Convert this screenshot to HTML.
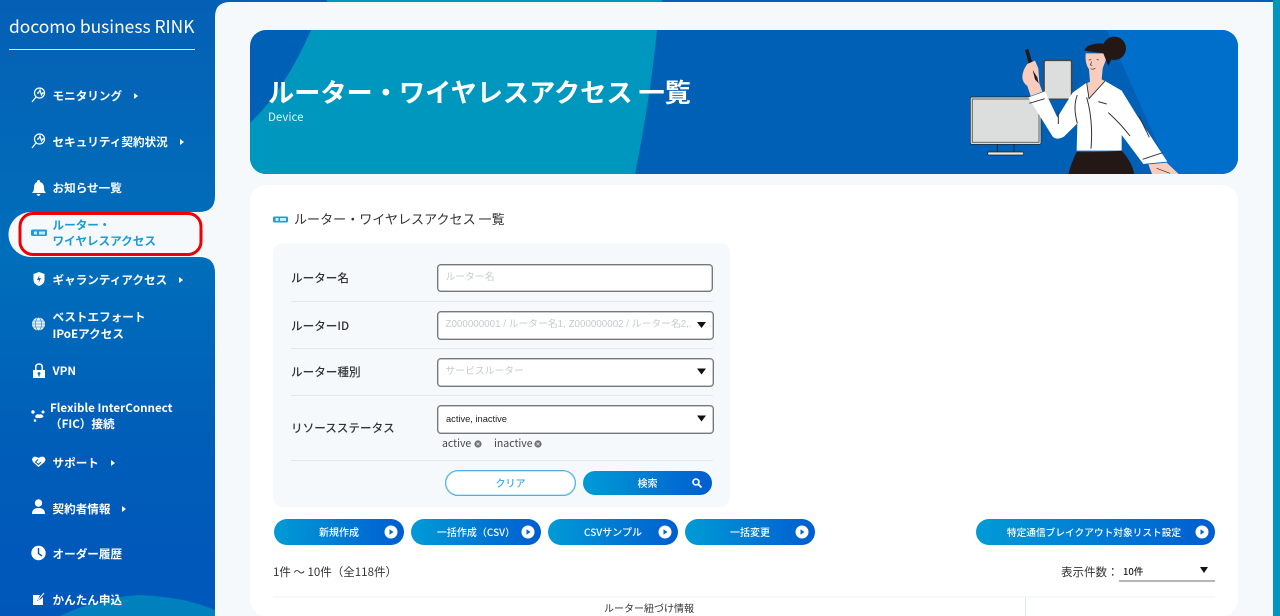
<!DOCTYPE html>
<html lang="ja"><head><meta charset="utf-8"><title>docomo business RINK</title>
<style>
html,body{margin:0;padding:0}
body{width:1280px;height:616px;overflow:hidden;position:relative;background:#fff;font-family:"Liberation Sans","Noto Sans CJK JP",sans-serif;color:#333}
#w{position:absolute;left:0;top:0;width:1280px;height:616px;overflow:hidden;filter:blur(.3px)}
.a{position:absolute;white-space:nowrap}
.j{font-family:"Noto Sans CJK JP","Liberation Sans",sans-serif}
.n{color:#fff;font-weight:700;font-size:11.6px;line-height:17px;left:52.5px;font-family:"Noto Sans CJK JP",sans-serif}
.l{left:291px;font-size:11.6px;font-weight:500;line-height:16px;font-family:"Noto Sans CJK JP",sans-serif;color:#333}
.i{position:absolute;box-sizing:border-box;background:#fff;border:1px solid #777;box-shadow:inset 0 0 0 .6px #aaa;border-radius:4px;left:437px;width:277px;height:29px;font-size:9.8px;color:#c6cacd;line-height:26px;padding-left:7.5px;white-space:nowrap;font-family:"Liberation Sans","Noto Sans CJK JP",sans-serif}
.h{position:absolute;height:1px;left:291px;width:422px;background:#e4e8ec}
.b{position:absolute;height:26px;top:519px;border-radius:13px;background:linear-gradient(90deg,#009bd6,#005dd0);color:#fff;font:500 10px/26px "Noto Sans CJK JP",sans-serif;text-align:center;white-space:nowrap}
.b svg{position:absolute;right:6px;top:6px}
</style></head><body><div id="w">
<svg class="a" style="left:0;top:0" width="1280" height="616" viewBox="0 0 1280 616">
<defs>
<linearGradient id="s" x1="0" y1="0" x2="0" y2="1"><stop offset="0" stop-color="#0560b5"/><stop offset=".42" stop-color="#006eba"/><stop offset=".75" stop-color="#005cb9"/><stop offset="1" stop-color="#0057ba"/></linearGradient>
<clipPath id="c"><rect x="250" y="30" width="988" height="144" rx="16"/></clipPath>
</defs>
<rect width="1280" height="616" fill="url(#s)"/>
<rect x="327" y="0" width="335" height="3" fill="#0097bf"/>
<rect x="1273" y="0" width="7" height="616" fill="#0097bf"/>
<path d="M60 616Q100 597 140 595Q185 597 215 610V616Z" fill="#0080bc"/>
<path d="M230 2H1273V616H215V273Q215 257 199 257H31A22.5 22.5 0 0 1 31 212H199Q215 212 215 196V17Q215 2 230 2Z" fill="#f5f9fc"/>
<g clip-path="url(#c)">
<path d="M250 30H1238V174H250Z" fill="#0060b6"/>
<path d="M1107 30H1238V174H1170L1153 133Z" fill="#006fcb"/>
<path d="M311 30H657Q650 100 635 174H250V123Q285 90 311 30Z" fill="#0097bf"/>
<g transform="translate(940 20) scale(.33333)">
<rect x="91" y="231" width="212" height="142" rx="5" fill="#dcdedd" stroke="#222" stroke-width="2"/>
<rect x="97" y="237" width="200" height="130" fill="#dcdedd" stroke="#666" stroke-width="3"/>
<path d="M172 373V396M222 373V396" stroke="#222" stroke-width="3"/>
<rect x="143" y="396" width="108" height="9" rx="4" fill="#e8e8e8" stroke="#222" stroke-width="2"/>
<rect x="312" y="121" width="83" height="117" rx="5" fill="#dcdedd" stroke="#444" stroke-width="5"/>
<path d="M255 90L265 87L276 125L266 130Z" fill="#231815"/>
<path d="M247 170Q248 150 262 132L285 122L295 145L298 190L307 215L272 228L262 198Q247 188 247 170Z" fill="#f8cdbd"/>
<path d="M278 150L292 172L296 190L285 178Z" fill="#231815"/>
<path d="M437 100Q434 130 447 148L450 185L440 190L447 236L495 183L485 178L488 145L505 100Z" fill="#f8cdbd"/>
<circle cx="523" cy="85" r="35" fill="#231815"/>
<path d="M433 92Q438 72 480 70Q515 72 522 100L505 138L490 100Z" fill="#231815"/>
<path d="M446 120L454 119M470 118L476 120M455 125L451 135L457 136M452 146Q460 150 466 144" stroke="#333" stroke-width="2" fill="none"/>
<path d="M265 232L315 214L352 292L398 218L440 188L447 236L495 183L545 212L590 285L682 425L610 432L545 345L545 392L410 392L412 310L372 350Q350 362 338 350Z" fill="#fff"/>
<path d="M440 188L447 236L495 183" stroke="#222" stroke-width="2.500" fill="none"/>
<path d="M268 250L314 236M608 418L668 398M475 245L500 252M355 275V312M412 225Q398 260 412 310M440 232Q460 300 453 386M505 278Q545 315 570 348M597 288L628 352" stroke="#333" stroke-width="3" fill="none"/>
<path d="M410 396Q480 398 545 392Q575 425 583 462H385Q395 425 410 396Z" fill="#231815"/>
<path d="M625 433L680 428L716 462H636Z" fill="#f8cdbd"/>
<path d="M650 445L690 460" stroke="#333" stroke-width="2"/>
</g>
</g>
<rect x="250" y="185" width="988" height="431" rx="16" fill="#fff"/>
<rect x="273" y="243" width="457" height="264" rx="10" fill="#f5f9fc"/>
<rect x="20" y="213.500" width="181" height="41" rx="13" fill="#f5f9fc" stroke="#ee0000" stroke-width="3"/>
<path d="M273 597H1215" stroke="#eef1f4"/><path d="M1025.500 597V616" stroke="#dfeaf6"/>
<path d="M1119 581H1215" stroke="#8a8a8a" stroke-width="1.200"/>
<!-- sidebar icons -->
<g fill="none" stroke="#fff" stroke-width="1.200"><circle cx="39.500" cy="93" r="5"/><path d="M36 97L32 102M37 93H38.500L40 90L41.500 95L42.500 93H44"/><circle cx="39.500" cy="139" r="5"/><path d="M36 143L32 148M37 139H38.500L40 136L41.500 141L42.500 139H44"/></g>
<path d="M38.500 180Q40 180 40 182Q44 183 44 188Q44 191 46 193H32Q34 191 34 188Q34 183 37 182Q37 180 38.500 180ZM36.500 194H40.500Q39.500 196 38.500 196Q37.500 196 36.500 194Z" fill="#fff"/>
<rect x="31" y="229.500" width="16" height="6.500" rx="1.500" fill="#1a9fdc"/><path d="M34 231.500H37V234.500H34ZM39 231.500H45V234.500H39Z" fill="#cfeaf7"/>
<path d="M39 272L44.500 274V280Q44.500 284 39 286Q33.500 284 33.500 280V274Z" fill="#fff"/><path d="M39.500 275L37 280H39L38.500 283L41 278H39Z" fill="#0a67b8"/>
<circle cx="38.500" cy="324" r="6.500" fill="#e6f0f8"/><g stroke="#2b7cc2" stroke-width=".6" fill="none"><path d="M32 324H45M33 321H44M33 327H44"/><ellipse cx="38.500" cy="324" rx="3" ry="6.500"/></g>
<path d="M33 370H45V378H33Z" fill="#fff"/><path d="M35.800 371V367Q35.800 364 39 364Q42.200 364 42.200 367V371" fill="none" stroke="#fff" stroke-width="1.500"/><circle cx="39" cy="373.500" r="1.400" fill="#0a67b8"/><rect x="38.400" y="374" width="1.200" height="2.500" fill="#0a67b8"/>
<g fill="#fff"><circle cx="33" cy="412" r="1.700"/><circle cx="35" cy="420.500" r="1.300"/><circle cx="43" cy="412" r="1.500"/><path d="M35 417Q36 413.500 39 414.500Q42 413.500 43.500 416.500Q42 418.500 39 418Q36 418.500 35 417Z"/></g>
<path d="M38.500 467L33 462Q31 459 33.500 457Q36 456 38.500 458Q41 456 44 457Q46.500 459 44.500 462Z" fill="#fff"/><path d="M38 459.500L35.500 462L38.500 464.500L41 462" stroke="#0a5fb8" stroke-width="1.100" fill="none"/>
<circle cx="38.500" cy="503" r="3.700" fill="#fff"/><path d="M32 514Q32 508 38.500 508Q45 508 45 514Z" fill="#fff"/>
<circle cx="38.500" cy="553" r="7.200" fill="#fff"/><path d="M38.500 548V553.500L42 556" stroke="#0a5cb8" stroke-width="1.500" fill="none"/>
<path d="M33 595H40L37 601L41 599L43 597V605H33Z" fill="#fff"/><path d="M38 600L44 593" stroke="#fff" stroke-width="1"/>
<path d="M134 93L138 96L134 99ZM180 139L184 142L180 145ZM179 277L183 280L179 283ZM111 460L115 463L111 466ZM122 506L126 509L122 512Z" fill="#fff"/>
<!-- heading icon -->
<rect x="273" y="216.500" width="15" height="6" rx="1.500" fill="#1a9fdc"/><path d="M275.500 218H278.500V221H275.500ZM280 218H286V221H280Z" fill="#cfeaf7"/>
<circle cx="478" cy="444" r="3.600" fill="#6f6f6f"/><circle cx="538" cy="444" r="3.600" fill="#6f6f6f"/>
<path d="M476.500 442.500L479.500 445.500M479.500 442.500L476.500 445.500M536.500 442.500L539.500 445.500M539.500 442.500L536.500 445.500" stroke="#ddd" stroke-width=".9"/>
</svg>

<div class="a" style="left:9px;top:13px;font:400 17.400px/28px 'Noto Sans CJK JP',sans-serif;color:#fff">docomo business RINK</div>
<div class="a" style="left:9px;top:49px;width:186px;height:1px;background:#d5e6f3"></div>
<div class="a n" style="top:88px">モニタリング</div>
<div class="a n" style="top:134px">セキュリティ契約状況</div>
<div class="a n" style="top:180px">お知らせ一覧</div>
<div class="a n" style="top:217px;line-height:16px;color:#1a9bd6">ルーター・<br>ワイヤレスアクセス</div>
<div class="a n" style="top:272px">ギャランティアクセス</div>
<div class="a n" style="top:309px">ベストエフォート<br>IPoEアクセス</div>
<div class="a n" style="top:363px">VPN</div>
<div class="a n" style="top:400px;left:50px;line-height:16px">Flexible InterConnect<br>（FIC）接続</div>
<div class="a n" style="top:455px">サポート</div>
<div class="a n" style="top:501px">契約者情報</div>
<div class="a n" style="top:546px">オーダー履歴</div>
<div class="a n" style="top:592px">かんたん申込</div>

<div class="a j" style="left:268px;top:72px;font-size:26.200px;line-height:38px;font-weight:700;color:#fff">ルーター・ワイヤレスアクセス 一覧</div>
<div class="a j" style="left:268px;top:109px;font-size:11.500px;line-height:16px;color:#e4f2f8">Device</div>
<div class="a j" style="left:294px;top:209px;font-size:13.050px;line-height:20px;font-weight:400;color:#333">ルーター・ワイヤレスアクセス 一覧</div>

<div class="a l" style="top:270px">ルーター名</div>
<div class="a l" style="top:318px">ルーターID</div>
<div class="a l" style="top:364px">ルーター種別</div>
<div class="a l" style="top:420px">リソースステータス</div>
<div class="i" style="top:264px;width:276px;height:28px">ルーター名</div>
<div class="i" style="top:311px">Z000000001 / ルーター名1, Z000000002 / ルーター名2,.</div>
<div class="i" style="top:358px">サービスルーター</div>
<div class="i" style="top:405px;color:#222;font-weight:500;font-size:9.300px;padding-left:8px">active, inactive</div>
<div class="h" style="top:301px"></div><div class="h" style="top:348px"></div><div class="h" style="top:395px"></div><div class="h" style="top:460px"></div>
<div class="a j" style="left:442px;top:436px;font-size:10.500px;line-height:16px;color:#444">active</div>
<div class="a j" style="left:494px;top:436px;font-size:10.500px;line-height:16px;color:#444">inactive</div>

<div class="a j" style="left:445px;top:470px;width:131px;height:26px;box-sizing:border-box;border:1px solid #4fb0e0;box-shadow:inset 0 0 0 .5px #8fd0ee;border-radius:13px;background:#fff;color:#45a8dc;font-size:10px;font-weight:500;line-height:24px;text-align:center">クリア</div>
<div class="b" style="left:583px;top:471px;width:129px;height:24px;line-height:24px;border-radius:12px">検索<svg width="12" height="12" viewBox="0 0 12 12" style="right:9px;top:6px"><circle cx="5" cy="5" r="3" fill="none" stroke="#fff" stroke-width="1.600"/><path d="M7.500 7.500L10.500 10.500" stroke="#fff" stroke-width="1.800"/></svg></div>

<div class="b" style="left:274px;width:130px">新規作成<svg width="14" height="14" viewBox="0 0 14 14"><circle cx="7" cy="7" r="6.500" fill="#fff"/><path d="M5.500 4.300L9.500 7L5.500 9.700Z" fill="#0a66cc"/></svg></div>
<div class="b" style="left:411px;width:130px">一括作成（CSV）<svg width="14" height="14" viewBox="0 0 14 14"><circle cx="7" cy="7" r="6.500" fill="#fff"/><path d="M5.500 4.300L9.500 7L5.500 9.700Z" fill="#0a66cc"/></svg></div>
<div class="b" style="left:548px;width:130px">CSVサンプル<svg width="14" height="14" viewBox="0 0 14 14"><circle cx="7" cy="7" r="6.500" fill="#fff"/><path d="M5.500 4.300L9.500 7L5.500 9.700Z" fill="#0a66cc"/></svg></div>
<div class="b" style="left:685px;width:130px">一括変更<svg width="14" height="14" viewBox="0 0 14 14"><circle cx="7" cy="7" r="6.500" fill="#fff"/><path d="M5.500 4.300L9.500 7L5.500 9.700Z" fill="#0a66cc"/></svg></div>
<div class="b" style="left:976px;width:239px;font-size:9.700px;text-indent:-3px">特定通信ブレイクアウト対象リスト設定<svg width="14" height="14" viewBox="0 0 14 14"><circle cx="7" cy="7" r="6.500" fill="#fff"/><path d="M5.500 4.300L9.500 7L5.500 9.700Z" fill="#0a66cc"/></svg></div>

<div class="a j" style="left:273px;top:564px;font-size:11.500px;line-height:16px;color:#333">1件 〜 10件（全118件）</div>
<div class="a j" style="left:1061px;top:564px;font-size:11.500px;line-height:16px;color:#333">表示件数：</div>
<div class="a j" style="left:1123px;top:564px;font-size:9.500px;line-height:14px;font-weight:500;color:#222">10件</div>
<div class="a j" style="left:604px;top:600px;font-size:10px;line-height:15px;color:#333">ルーター紐づけ情報</div>
<svg class="a" style="left:0;top:0" width="1280" height="616" viewBox="0 0 1280 616"><path d="M697 322H706L701.500 328ZM697 368.500H706L701.500 374.500ZM697 415.500H706L701.500 421.500ZM1200 567H1208L1204 573Z" fill="#111"/></svg>
</div></body></html>
